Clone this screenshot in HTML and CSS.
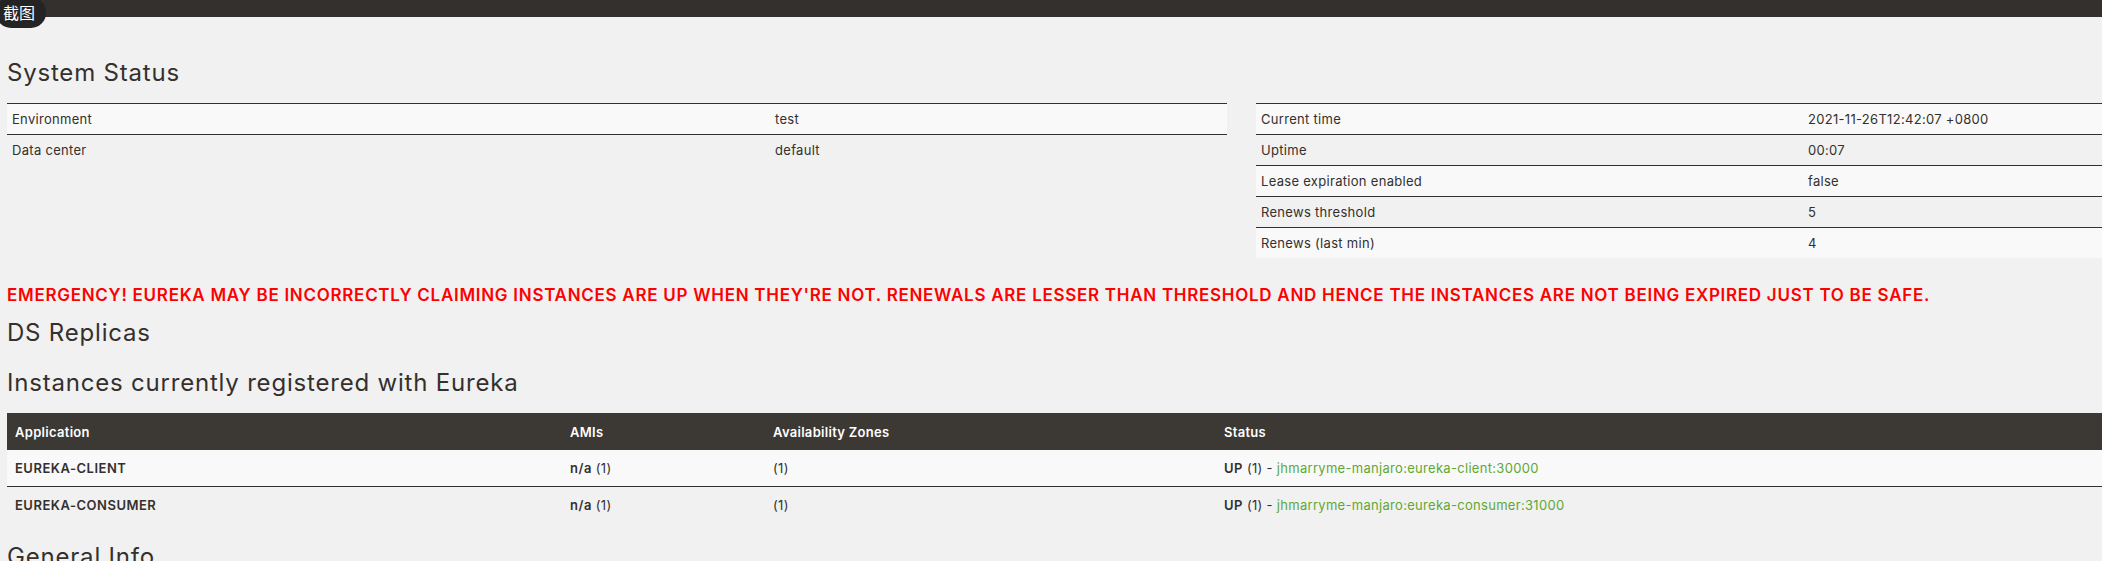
FILE: index.html
```html
<!DOCTYPE html>
<html lang="en">
<head>
<meta charset="utf-8">
<title>Eureka</title>
<link rel="stylesheet" href="styles.css">
</head>
<body>
<div class="navbar"></div>
<div class="shot-badge">截图</div>
<main class="page">
  <h1 class="title title-first">System Status</h1>
  <div class="status-row">
    <table class="kv kv-left">
      <tbody>
        <tr class="odd"><td class="k">Environment</td><td>test</td></tr>
        <tr><td class="k">Data center</td><td>default</td></tr>
      </tbody>
    </table>
    <table class="kv kv-right">
      <tbody>
        <tr class="odd"><td class="k">Current time</td><td>2021-11-26T12:42:07 +0800</td></tr>
        <tr><td class="k">Uptime</td><td>00:07</td></tr>
        <tr class="odd"><td class="k">Lease expiration enabled</td><td>false</td></tr>
        <tr><td class="k">Renews threshold</td><td>5</td></tr>
        <tr class="odd"><td class="k">Renews (last min)</td><td>4</td></tr>
      </tbody>
    </table>
  </div>
  <h4 class="emergency">EMERGENCY! EUREKA MAY BE INCORRECTLY CLAIMING INSTANCES ARE UP WHEN THEY'RE NOT. RENEWALS ARE LESSER THAN THRESHOLD AND HENCE THE INSTANCES ARE NOT BEING EXPIRED JUST TO BE SAFE.</h4>
  <h1 class="title title-ds">DS Replicas</h1>
  <h1 class="title title-inst">Instances currently registered with Eureka</h1>
  <table class="instances">
    <thead>
      <tr>
        <th class="c-app">Application</th>
        <th class="c-ami">AMIs</th>
        <th class="c-az">Availability Zones</th>
        <th class="c-status">Status</th>
      </tr>
    </thead>
    <tbody>
      <tr class="odd">
        <td><b>EUREKA-CLIENT</b></td>
        <td><b>n/a</b> (1)</td>
        <td>(1)</td>
        <td><b>UP</b> (1) - <a class="inst-link" href="#">jhmarryme-manjaro:eureka-client:30000</a></td>
      </tr>
      <tr>
        <td><b>EUREKA-CONSUMER</b></td>
        <td><b>n/a</b> (1)</td>
        <td>(1)</td>
        <td><b>UP</b> (1) - <a class="inst-link" href="#">jhmarryme-manjaro:eureka-consumer:31000</a></td>
      </tr>
    </tbody>
  </table>
  <h1 class="title title-general">General Info</h1>
</main>
</body>
</html>
```
FILE: styles.css
```css
html, body {
  margin: 0;
  padding: 0;
  overflow: hidden;
  background: #f1f1f1;
}
body {
  font-family: Inter, "Noto Sans", sans-serif;
  font-size: 13px;
  line-height: 20px;
  color: #34302d;
  position: relative;
}
.navbar {
  height: 17px;
  background: #34302d;
}
.shot-badge {
  position: absolute;
  left: -4px;
  top: -3px;
  width: 50px;
  height: 31px;
  border-radius: 15px;
  background: #242424;
  color: #ffffff;
  font-family: "Noto Sans CJK SC", sans-serif;
  font-size: 16px;
  line-height: 31px;
  padding-left: 7px;
  box-sizing: border-box;
}
.page {
  padding-left: 7px;
  width: 2490px;
}
.title {
  font-family: Inter, "Noto Sans", sans-serif;
  font-weight: 400;
  font-size: 24px;
  line-height: 28px;
  letter-spacing: 0.8px;
  margin: 0;
  color: #34302d;
}
.title-first { margin-top: 42px; margin-bottom: 16px; }
.status-row {
  display: flex;
  gap: 29px;
  align-items: flex-start;
}
table {
  border-collapse: collapse;
  border-spacing: 0;
  table-layout: fixed;
}
.kv { width: 1220px; flex: none; }
.kv td {
  padding: 5px;
  border-top: 1px solid #34302d;
  vertical-align: top;
  white-space: nowrap;
  letter-spacing: 0.3px;
}
.kv tr.odd td { background: #f9f9f9; }
.kv-left td.k { width: 753px; }
.kv-right td.k { width: 537px; }
.emergency {
  margin: 27px 0 0;
  color: #ff0000;
  font-size: 17px;
  line-height: 20px;
  font-weight: 600;
  letter-spacing: 0.72px;
  white-space: nowrap;
}
.title-ds { margin-top: 14px; }
.title-inst { margin-top: 22px; margin-bottom: 16px; }
.instances {
  width: 2489px;
}
.instances th {
  background: #3c3834;
  color: #ffffff;
  text-align: left;
  font-weight: 600;
  padding: 8px;
  height: 21px;
  letter-spacing: 0.3px;
}
.instances td {
  padding: 8px;
  letter-spacing: 0.3px;
  white-space: nowrap;
}
.instances tbody tr + tr td { border-top: 1px solid #34302d; }
.instances tr.odd td { background: #f9f9f9; }
.instances b { font-weight: 600; letter-spacing: 0.5px; }
.c-app { width: 539px; }
.c-ami { width: 187px; }
.c-az { width: 435px; }
.inst-link {
  color: #5fa834;
  text-decoration: none;
}
.title-general { margin-top: 20px; }
```
